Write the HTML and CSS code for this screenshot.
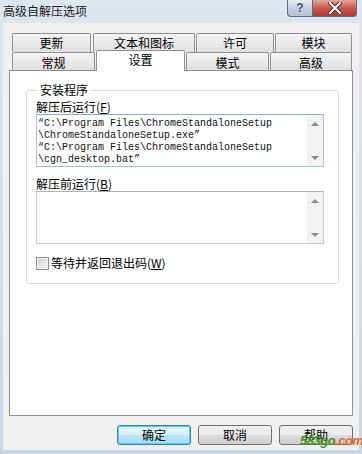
FILE: index.html
```html
<!DOCTYPE html>
<html lang="zh-CN">
<head>
    <meta charset="UTF-8">
    <title>高级自解压选项</title>
    <link rel="stylesheet" href="styles.css">
</head>
<body>

<div class="window">
    <!-- Title bar -->
    <div class="titlebar">
        <span class="title">高级自解压选项</span>
        <div class="caption-buttons">
            <span class="cap-btn help">?</span>
            <span class="cap-btn close">
                <svg width="14" height="12" viewBox="0 0 14 12">
                    <path d="M2 1 L12 11 M12 1 L2 11" stroke="#4a2020" stroke-width="4" stroke-linecap="square"/>
                    <path d="M2 1 L12 11 M12 1 L2 11" stroke="#ffffff" stroke-width="2.2" stroke-linecap="square"/>
                </svg>
            </span>
        </div>
    </div>

    <div class="client">
        <!-- Tabs -->
        <div class="tabs">
            <div class="tab-row back">
                <span class="tab t-update">更新</span>
                <span class="tab t-text">文本和图标</span>
                <span class="tab t-license">许可</span>
                <span class="tab t-module">模块</span>
            </div>
            <div class="tab-row front">
                <span class="tab t-general">常规</span>
                <span class="tab t-setup active">设置</span>
                <span class="tab t-mode">模式</span>
                <span class="tab t-advanced">高级</span>
            </div>
        </div>

        <div class="panel">
            <fieldset class="group">
                <legend>安装程序</legend>

                <div class="field-label">解压后运行(<u>F</u>)</div>
                <div class="textbox focused">
                    <div class="text-content">“C:\Program Files\ChromeStandaloneSetup<br>\ChromeStandaloneSetup.exe”<br>“C:\Program Files\ChromeStandaloneSetup<br>\cgn_desktop.bat”</div>
                    <div class="scrollbar">
                        <span class="arrow up"></span>
                        <span class="arrow down"></span>
                    </div>
                </div>

                <div class="field-label second">解压前运行(<u>B</u>)</div>
                <div class="textbox">
                    <div class="text-content"></div>
                    <div class="scrollbar">
                        <span class="arrow up"></span>
                        <span class="arrow down"></span>
                    </div>
                </div>

                <div class="check-row">
                    <span class="checkbox"></span>
                    <span>等待并返回退出码(<u>W</u>)</span>
                </div>
            </fieldset>
        </div>

        <!-- Dialog buttons -->
        <div class="buttons">
            <span class="btn default">确定</span>
            <span class="btn">取消</span>
            <span class="btn">帮助</span>
        </div>

        <span class="watermark"><b class="wm-green">583go</b><b class="wm-orange">.com</b></span>
    </div>
</div>

</body>
</html>
```

FILE: styles.css
```css
body {
    margin: 0;
    font-family: "Noto Sans CJK SC", "Liberation Sans", sans-serif;
    font-size: 12px;
    color: #000;
    background: #f0f0f0;
}
.window {
    width: 362px;
    height: 454px;
    box-sizing: border-box;
    padding: 0 3px 4px 3px;
    background: linear-gradient(#dde7f0, #c8d7e6);
    display: flex;
    flex-direction: column;
}

/* title bar */
.titlebar {
    height: 23px;
    display: flex;
    align-items: flex-start;
    flex-shrink: 0;
}
.title {
    line-height: 22px;
    font-size: 12px;
    color: #1a1a1a;
}
.caption-buttons {
    margin-left: auto;
    margin-right: 2px;
    display: flex;
}
.cap-btn {
    height: 17px;
    display: flex;
    align-items: center;
    justify-content: center;
    box-sizing: border-box;
    border: 1px solid #5c6e82;
    border-top: none;
}
.help {
    width: 26px;
    border-radius: 0 0 0 4px;
    background: linear-gradient(#e9eef4, #c3cfdc 55%, #b6c4d3);
    color: #4c5a6a;
    font-size: 12px;
    font-family: "Liberation Sans", sans-serif;
    font-weight: bold;
    line-height: 15px;
}
.close {
    width: 44px;
    border-left: none;
    border-radius: 0 0 4px 0;
    background: linear-gradient(#e6a49c, #c9584b 50%, #b8392c);
}

/* client area */
.client {
    flex: 1;
    background: #f0f0f0;
    padding: 10px 6px 0 6px;
    position: relative;
}
.tabs {
    padding-left: 3px;
}
.tab-row {
    display: flex;
    gap: 1px;
}
.tab-row.back {
    height: 19px;
}
.tab-row.front {
    height: 18px;
    align-items: flex-end;
}
.tab {
    display: flex;
    align-items: center;
    justify-content: center;
    box-sizing: border-box;
    border: 1px solid #8e9096;
    border-bottom: none;
    background: linear-gradient(#f4f4f4, #e0e0e0);
    border-radius: 2px 2px 0 0;
    line-height: 13px;
}
.back .tab {
    height: 19px;
    padding-bottom: 1px;
}
.front .tab {
    height: 18px;
    padding-top: 1px;
}
.front .tab.active {
    height: 21px;
    margin-bottom: -1px;
    background: #fff;
    padding-top: 0;
    padding-bottom: 4px;
    position: relative;
    z-index: 1;
}
.t-update { width: 79px; margin-right: 1px; }
.t-text { width: 102px; }
.t-license { width: 78px; }
.t-module { width: 77px; }
.t-general { width: 83px; }
.t-setup { width: 89px; }
.t-mode { width: 83px; }
.t-advanced { width: 82px; }

.panel {
    width: 344px;
    height: 346px;
    box-sizing: border-box;
    border: 1px solid #8e9096;
    background: #fff;
}

/* group box */
.group {
    box-sizing: border-box;
    width: 313px;
    min-width: 0;
    margin: 11px 0 0 16px;
    padding: 2px 14px 13px 9px;
    border: 1px solid #d5dfe5;
    border-radius: 3px;
}
.group legend {
    padding: 0 2px;
    margin-left: 2px;
    line-height: 16px;
}
.field-label {
    line-height: 14px;
}
.field-label.second {
    margin-top: 10px;
}
u {
    text-decoration: underline;
}
.textbox {
    height: 53px;
    box-sizing: border-box;
    border: 1px solid #c4cbd3;
    border-top-color: #abb3bc;
    display: flex;
    background: #fff;
}
.textbox.focused {
    border-color: #a4bfd6;
    border-top-color: #8fb0cc;
}
.text-content {
    flex: 1;
    padding: 3px 0 0 1px;
    font-family: "Liberation Mono", "Noto Sans CJK SC", monospace;
    font-size: 10px;
    line-height: 12px;
    color: #111;
    white-space: nowrap;
    overflow: hidden;
}
.scrollbar {
    width: 17px;
    background: #f3f3f3;
    border-left: 1px solid #fbfbfb;
    display: flex;
    flex-direction: column;
    justify-content: space-between;
    align-items: center;
    padding: 7px 0 6px 0;
    box-sizing: border-box;
}
.arrow {
    width: 0;
    height: 0;
    border-left: 4px solid transparent;
    border-right: 4px solid transparent;
}
.arrow.up {
    border-bottom: 4px solid #8a8a8a;
}
.arrow.down {
    border-top: 4px solid #8a8a8a;
}
.check-row {
    margin-top: 12px;
    display: flex;
    align-items: center;
    gap: 2px;
    line-height: 14px;
}
.checkbox {
    width: 13px;
    height: 13px;
    box-sizing: border-box;
    border: 1px solid #8f8f8f;
    background: linear-gradient(135deg, #d0d0d0, #f6f6f6);
    box-shadow: inset 0 0 0 1px #f4f4f4;
}

/* dialog buttons */
.buttons {
    display: flex;
    justify-content: flex-end;
    gap: 7px;
    margin-top: 9px;
}
.btn {
    width: 74px;
    height: 20px;
    box-sizing: border-box;
    border: 1px solid #707070;
    border-radius: 3px;
    background: linear-gradient(#f2f2f2 0%, #ebebeb 50%, #dddddd 51%, #cfcfcf 100%);
    display: flex;
    align-items: center;
    justify-content: center;
    line-height: 14px;
}
.btn.default {
    border-color: #3c7fb1;
    background: linear-gradient(#eaf6fd 0%, #d9f0fc 50%, #bee6fd 51%, #a7d9f5 100%);
    box-shadow: inset 0 0 0 1px #48d5fd;
}

/* watermark over the corner */
.watermark {
    position: absolute;
    left: 297px;
    top: 411px;
    font-family: "Liberation Sans", sans-serif;
    font-style: italic;
    font-size: 13px;
    line-height: 14px;
    letter-spacing: -0.5px;
}
.wm-green {
    color: #3c8c1c;
}
.wm-orange {
    color: #e8642c;
}
```
